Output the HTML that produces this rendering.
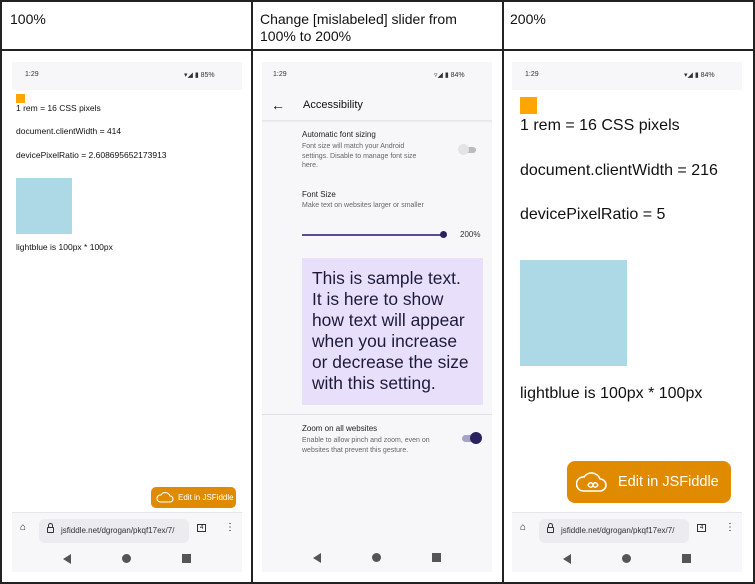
<!DOCTYPE html>
<html><head><style>
*{margin:0;padding:0;box-sizing:border-box}
body{width:755px;height:584px;background:#fff;font-family:"Liberation Sans",sans-serif;position:relative;overflow:hidden;color:#111}
.a{position:absolute;white-space:nowrap}
.ph{position:absolute;top:62px;width:230px;height:510px;background:#fff;overflow:hidden}
.sb{position:absolute;left:0;top:0;width:230px;height:28px;background:#f7f7f9;font-size:7px;color:#333}
.tb{position:absolute;left:0;top:450px;width:230px;height:60px;background:#f7f7f9;border-top:1px solid #e6e6ea}
.url{position:absolute;left:27px;top:6px;width:150px;height:24px;background:#ececf0;border-radius:6px;font-size:8px;color:#333;padding:7px 0 0 22px;white-space:nowrap;overflow:hidden}
.nav{position:absolute;top:41px;width:9px;height:9px;background:#555}
.lock{position:absolute;left:8px;top:8px;width:7px;height:6px;border:1px solid #333;border-radius:1px}
.lock:before{content:"";position:absolute;left:0;top:-5px;width:3px;height:4px;border:1px solid #333;border-bottom:none;border-radius:3px 3px 0 0}
</style></head><body>
<div class="a" style="left:0;top:0;width:755px;height:584px;border:2px solid #222"></div>
<div class="a" style="left:2px;top:49px;width:751px;height:2px;background:#222"></div>
<div class="a" style="left:251px;top:2px;width:2px;height:580px;background:#222"></div>
<div class="a" style="left:502px;top:2px;width:2px;height:580px;background:#222"></div>
<div class="a" style="left:10px;top:11px;font-size:14px">100%</div>
<div class="a" style="left:260px;top:11px;font-size:14px;line-height:17px">Change [mislabeled] slider from<br>100% to 200%</div>
<div class="a" style="left:510px;top:11px;font-size:14px">200%</div>

<!-- panel 1 -->
<div class="ph" style="left:12px">
<div class="sb"><span class="a" style="left:13px;top:9px">1:29</span><span class="a" style="left:172px;top:9px">▾◢ ▮ 85%</span></div>
<div class="a" style="left:4px;top:32px;width:9px;height:9px;background:#ffa500"></div>
<div class="a" style="left:4px;top:41px;font-size:8.5px">1 rem = 16 CSS pixels</div>
<div class="a" style="left:4px;top:64px;font-size:8.5px">document.clientWidth = 414</div>
<div class="a" style="left:4px;top:88px;font-size:8.5px">devicePixelRatio = 2.608695652173913</div>
<div class="a" style="left:4px;top:116px;width:56px;height:56px;background:#add8e6"></div>
<div class="a" style="left:4px;top:180px;font-size:8.5px">lightblue is 100px * 100px</div>
<div class="a" style="left:139px;top:425px;width:85px;height:21px;background:#e08a00;border-radius:5px;color:#fff;font-size:8px;padding:6px 0 0 27px">Edit in JSFiddle</div>
<svg class="a" style="left:144px;top:429px" width="18" height="13" viewBox="0 0 18 13"><path d="M4 11h10a3 3 0 0 0 0-6 5 5 0 0 0-9-1 3.5 3.5 0 0 0-1 7z" fill="none" stroke="#fff" stroke-width="1.1"/></svg>
<div class="tb"><span class="a" style="left:8px;top:9px;font-size:10px">⌂</span><div class="url"><span class="lock"></span>jsfiddle.net/dgrogan/pkqf17ex/7/</div><span class="a" style="left:185px;top:11px;font-size:6px;border:1px solid #333;padding:0 2px">4</span><span class="a" style="left:213px;top:9px;font-size:10px">⋮</span>
<div class="nav" style="left:51px;background:none;width:0;height:0;border-top:5px solid transparent;border-bottom:5px solid transparent;border-right:8px solid #555"></div><div class="nav" style="left:110px;border-radius:50%"></div><div class="nav" style="left:170px"></div></div>
</div>

<!-- panel 2 -->
<div class="ph" style="left:262px;background:#f7f7fa">
<div class="sb" style="background:#f7f7fa"><span class="a" style="left:11px;top:9px">1:29</span><span class="a" style="left:172px;top:9px">▿◢ ▮ 84%</span></div>
<span class="a" style="left:9px;top:35px;font-size:14px">←</span>
<span class="a" style="left:41px;top:37px;font-size:11px">Accessibility</span>
<div class="a" style="left:0;top:58px;width:230px;height:3px;background:linear-gradient(#e4e4e8,#f7f7fa)"></div>
<div class="a" style="left:40px;top:68px;font-size:8px;color:#222">Automatic font sizing</div>
<div class="a" style="left:40px;top:80px;font-size:7px;color:#666;line-height:9.5px">Font size will match your Android<br>settings. Disable to manage font size<br>here.</div>
<div class="a" style="left:198px;top:85px;width:16px;height:6px;border-radius:3px;background:#bbb"></div>
<div class="a" style="left:196px;top:82px;width:11px;height:11px;border-radius:50%;background:#e4e4e6"></div>
<div class="a" style="left:40px;top:128px;font-size:8px;color:#222">Font Size</div>
<div class="a" style="left:40px;top:140px;font-size:7px;color:#666">Make text on websites larger or smaller</div>
<div class="a" style="left:40px;top:172px;width:142px;height:2px;background:#5a4f8a"></div>
<div class="a" style="left:178px;top:169px;width:7px;height:7px;border-radius:50%;background:#2a2260"></div>
<div class="a" style="left:198px;top:168px;font-size:8px;color:#333">200%</div>
<div class="a" style="left:40px;top:196px;width:181px;height:147px;background:#e8e0fb;color:#1d1b3a;font-size:17.4px;line-height:21px;padding:10px 0 0 10px;white-space:nowrap">This is sample text.<br>It is here to show<br>how text will appear<br>when you increase<br>or decrease the size<br>with this setting.</div>
<div class="a" style="left:0;top:352px;width:230px;height:1px;background:#e2e2e6"></div>
<div class="a" style="left:40px;top:362px;font-size:8px;color:#222">Zoom on all websites</div>
<div class="a" style="left:40px;top:374px;font-size:7px;color:#666;line-height:9.5px">Enable to allow pinch and zoom, even on<br>websites that prevent this gesture.</div>
<div class="a" style="left:200px;top:373px;width:16px;height:7px;border-radius:4px;background:#a9a2c8"></div>
<div class="a" style="left:208px;top:370px;width:12px;height:12px;border-radius:50%;background:#2a2260"></div>
<div class="nav" style="left:51px;top:491px;background:none;width:0;height:0;border-top:5px solid transparent;border-bottom:5px solid transparent;border-right:8px solid #555"></div><div class="nav" style="left:110px;top:491px;border-radius:50%"></div><div class="nav" style="left:170px;top:491px"></div>
</div>

<!-- panel 3 -->
<div class="ph" style="left:512px">
<div class="sb"><span class="a" style="left:13px;top:9px">1:29</span><span class="a" style="left:172px;top:9px">▾◢ ▮ 84%</span></div>
<div class="a" style="left:8px;top:35px;width:17px;height:17px;background:#ffa500"></div>
<div class="a" style="left:8px;top:55px;font-size:16px">1 rem = 16 CSS pixels</div>
<div class="a" style="left:8px;top:100px;font-size:16px">document.clientWidth = 216</div>
<div class="a" style="left:8px;top:144px;font-size:16px">devicePixelRatio = 5</div>
<div class="a" style="left:8px;top:198px;width:107px;height:106px;background:#add8e6"></div>
<div class="a" style="left:8px;top:323px;font-size:16px">lightblue is 100px * 100px</div>
<div class="a" style="left:55px;top:399px;width:164px;height:42px;background:#e08a00;border-radius:8px;color:#fff;font-size:14.5px;padding:13px 0 0 51px">Edit in JSFiddle</div>
<svg class="a" style="left:64px;top:408px" width="32" height="24" viewBox="0 0 32 24"><path d="M7 21h17a6 6 0 0 0 0-12 9 9 0 0 0-16-2 7 7 0 0 0-1 14z" fill="none" stroke="#fff" stroke-width="1.6"/><path d="M12 15c2-3 4-3 5 0s3 3 5 0c-2-3-4-3-5 0s-3 3-5 0z" fill="none" stroke="#fff" stroke-width="1.4"/></svg>
<div class="tb"><span class="a" style="left:8px;top:9px;font-size:10px">⌂</span><div class="url"><span class="lock"></span>jsfiddle.net/dgrogan/pkqf17ex/7/</div><span class="a" style="left:185px;top:11px;font-size:6px;border:1px solid #333;padding:0 2px">4</span><span class="a" style="left:213px;top:9px;font-size:10px">⋮</span>
<div class="nav" style="left:51px;background:none;width:0;height:0;border-top:5px solid transparent;border-bottom:5px solid transparent;border-right:8px solid #555"></div><div class="nav" style="left:110px;border-radius:50%"></div><div class="nav" style="left:170px"></div></div>
</div>
</body></html>
